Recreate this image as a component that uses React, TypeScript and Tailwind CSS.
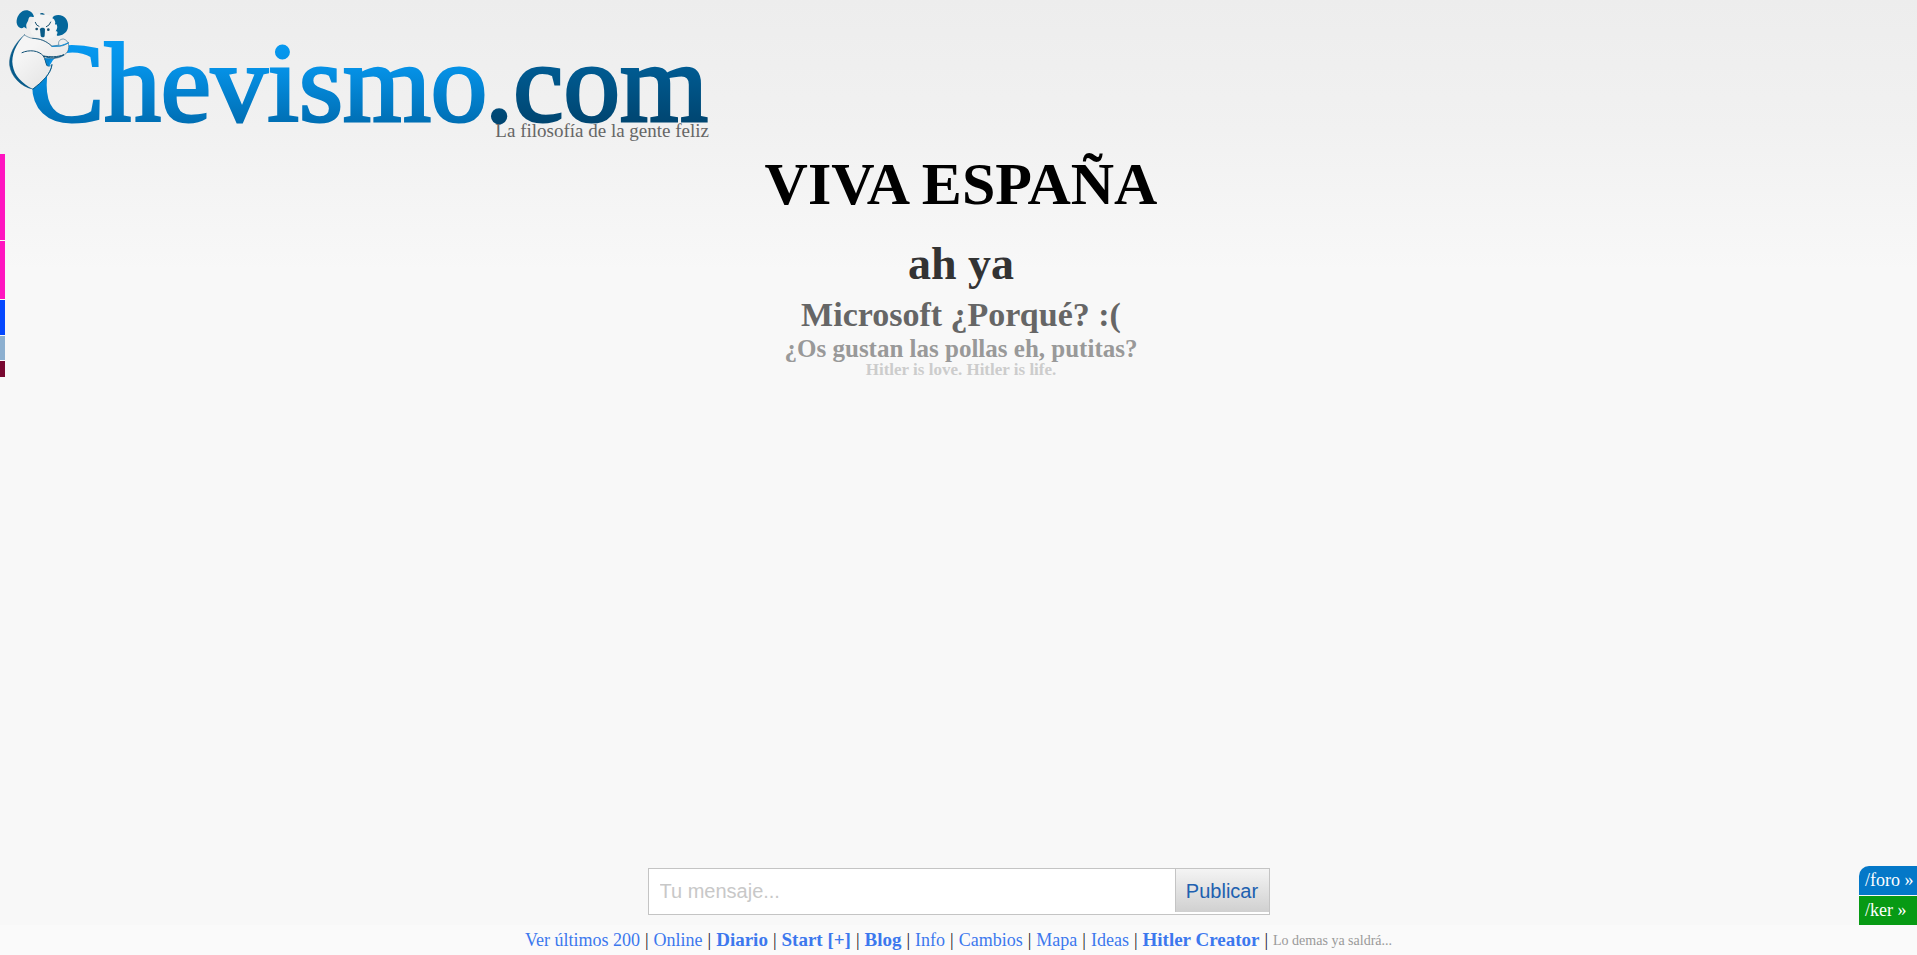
import React from "react";

const strips = [
  { color: "bg-[#ff14c0]", height: "h-[86px]" },
  { color: "bg-[#ff14c0]", height: "h-[58px]" },
  { color: "bg-[#0548ff]", height: "h-[35px]" },
  { color: "bg-[#8db0d0]", height: "h-[24px]" },
  { color: "bg-[#780830]", height: "h-[16px]" },
];

const messages = [
  { text: "VIVA ESPAÑA", style: "text-[60px] leading-[60px] text-black mb-[22px]" },
  { text: "ah ya", style: "text-[46px] leading-[56px] text-[#333333]" },
  { text: "Microsoft ¿Porqué? :(", style: "text-[34px] leading-[46px] text-[#666666]" },
  { text: "¿Os gustan las pollas eh, putitas?", style: "text-[25px] leading-[22px] text-[#999999]" },
  { text: "Hitler is love. Hitler is life.", style: "text-[17px] leading-[20px] text-[#cccccc]" },
];

const links = [
  { label: "Ver últimos 200", bold: false },
  { label: "Online", bold: false },
  { label: "Diario", bold: true },
  { label: "Start [+]", bold: true },
  { label: "Blog", bold: true },
  { label: "Info", bold: false },
  { label: "Cambios", bold: false },
  { label: "Mapa", bold: false },
  { label: "Ideas", bold: false },
  { label: "Hitler Creator", bold: true },
];

function Koala() {
  return (
    <g transform="scale(0.33333)" strokeLinecap="round" strokeLinejoin="round">
      <path d="M99 68 C88 76 88 96 98 106 C115 120 150 122 165 108 L172 78 L157 52 C140 38 115 38 102 48 Z" fill="#f3f3f3" />
      <path d="M102 50 C98 33 80 26 67 34 C54 42 47 60 51 73 C54 84 65 88 72 81 L80 86 C79 79 77 74 81 68 C86 64 84 56 88 52 C92 48 96 53 102 50 Z" fill="#04679b" />
      <path d="M157 55 C160 45 176 43 188 48 C202 55 207 72 203 86 C199 99 187 107 171 107 C169 103 175 100 171 94 L167 94 C175 84 171 75 169 73 C166 76 164 72 166 67 C164 61 162 56 157 55 Z" fill="#04679b" />
      <path d="M120 41 C125 37 130 40 135 43 C130 46 126 43 120 43 Z" fill="#0a5c88" />
      <path d="M106 67 L110 75 L117 79 M152 66 L147 75 L139 80" fill="none" stroke="#174f6e" strokeWidth="3" />
      <circle cx="110" cy="87" r="4" fill="#174f6e" />
      <circle cx="145" cy="89" r="4" fill="#174f6e" />
      <path d="M120 88 C121 82 134 82 135 88 L134 107 C133 113 124 113 122 107 Z" fill="#0a5c88" />
      <path
        d="M73 105 C42 132 26 166 29 196 C34 230 62 260 99 267 C126 246 153 222 156 194 C150 200 144 200 140 196 L134 176 C150 177 190 178 203 154 C210 140 206 120 190 117 C179 117 173 126 177 135 L156 139 C138 122 120 116 98 115 C88 114 80 109 73 105 Z"
        fill="url(#fur)"
        stroke="#0f4f74"
        strokeWidth="1.5"
      />
      <path d="M73 105 C42 132 26 166 29 196 C34 230 62 260 99 268 C66 250 43 228 38 196 C33 166 48 132 73 105 Z" fill="#065b8b" />
      <path d="M66 158 C88 148 116 151 130 168 C148 176 172 176 192 164 C172 172 150 171 130 168 C137 178 137 188 141 196" fill="none" stroke="#0f4f74" strokeWidth="3" />
      <path d="M134 174 C141 176 148 176 154 174 C148 181 147 189 146 197 C140 196 138 184 134 174 Z" fill="#0784cf" />
      <path d="M98 115 C120 116 138 122 156 139 L180 138 C190 138 198 133 206 128" fill="none" stroke="#0f4f74" strokeWidth="2" />
      <path d="M156 139 L180 138 L205 129" fill="none" stroke="#0b8fdc" strokeWidth="3" />
      <path d="M99 267 C126 246 153 222 156 194" fill="none" stroke="#065b8b" strokeWidth="3" />
    </g>
  );
}

function Logo() {
  return (
    <svg viewBox="0 0 720 148" className="block h-[148px] w-[720px]" role="img" aria-label="Chevismo.com">
      <defs>
        <linearGradient id="sky" gradientUnits="userSpaceOnUse" x1="0" y1="35" x2="0" y2="124">
          <stop offset="0" stopColor="#079cf5" />
          <stop offset="0.4" stopColor="#0590e4" />
          <stop offset="1" stopColor="#006eb3" />
        </linearGradient>
        <linearGradient id="navy" gradientUnits="userSpaceOnUse" x1="0" y1="67" x2="0" y2="124">
          <stop offset="0" stopColor="#005b92" />
          <stop offset="1" stopColor="#004570" />
        </linearGradient>
        <linearGradient id="fur" x1="0" y1="0" x2="1" y2="1">
          <stop offset="0.3" stopColor="#f5f5f5" />
          <stop offset="1" stopColor="#dedede" />
        </linearGradient>
      </defs>
      <g fontFamily="'Liberation Serif', serif" fontSize="113" strokeWidth="3">
        <text x="29" y="121" fill="url(#sky)" stroke="url(#sky)">Chevismo</text>
        <text x="485" y="121" fill="url(#navy)" stroke="url(#navy)">.com</text>
      </g>
      <text x="709" y="137" textAnchor="end" fontFamily="'Liberation Serif', serif" fontSize="19" fill="#666666">
        La filosofía de la gente feliz
      </text>
      <Koala />
    </svg>
  );
}

export default function App() {
  return (
    <div className="flex min-h-screen flex-col bg-[#f8f8f8] bg-[linear-gradient(#ededed_0px,#f1f1f1_130px,#f8f8f8_270px)] font-['Liberation_Serif',serif]">
      <header className="pb-[6px]">
        <a href="#inicio" className="inline-block align-top">
          <Logo />
        </a>
      </header>

      <main className="flex grow items-start">
        <aside className="flex w-[5px] flex-col gap-px">
          {strips.map((s, i) => (
            <div key={i} className={`${s.color} ${s.height}`} />
          ))}
        </aside>
        <section className="grow text-center font-bold">
          {messages.map((m) => (
            <p key={m.text} className={m.style}>{m.text}</p>
          ))}
        </section>
      </main>

      <div className="relative flex justify-center pb-[10px]">
        <form
          className="flex h-[47px] w-[622px] border border-[#c4c4c4] bg-white font-['Liberation_Sans',sans-serif] text-[20px]"
          onSubmit={(e) => e.preventDefault()}
        >
          <input
            type="text"
            aria-label="Tu mensaje"
            placeholder="Tu mensaje..."
            className="min-w-0 grow bg-white px-[11px] pb-[2px] text-[#333333] outline-none placeholder:text-[#c8c8c8]"
          />
          <button
            type="submit"
            className="mb-[2px] w-[94px] border-l border-[#c4c4c4] bg-linear-to-b from-[#f4f4f4] to-[#d0d0d0] text-[#2060b0]"
          >
            Publicar
          </button>
        </form>
        <nav className="absolute right-0 bottom-0 flex w-[58px] flex-col gap-px text-[18px] leading-[29px] text-white">
          <a href="#foro" className="rounded-tl-[10px] bg-[#0478c8] pl-[6px] whitespace-nowrap">/foro »</a>
          <a href="#ker" className="bg-[#079a14] pl-[6px] whitespace-nowrap">/ker »</a>
        </nav>
      </div>

      <footer className="flex h-[30px] items-center justify-center gap-[5px] bg-[#fafafa] text-[18px] text-[#222222]">
        {links.map((l) => (
          <React.Fragment key={l.label}>
            <a href="#enlace" className={l.bold ? "text-[19px] font-bold text-[#3c78ee]" : "text-[#3c78ee]"}>
              {l.label}
            </a>
            <span>|</span>
          </React.Fragment>
        ))}
        <span className="text-[14px] text-[#999999]">Lo demas ya saldrá...</span>
      </footer>
    </div>
  );
}
